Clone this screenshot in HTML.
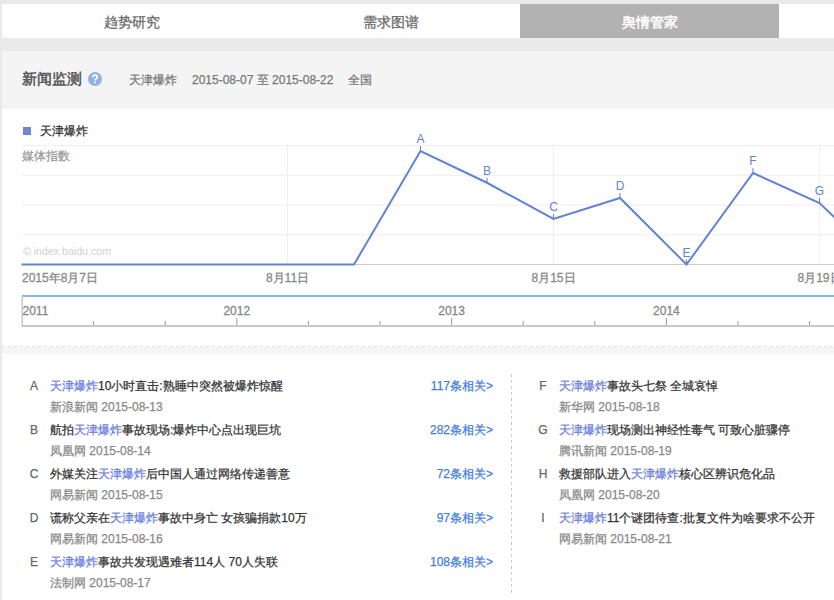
<!DOCTYPE html>
<html><head><meta charset="utf-8">
<style>
html,body{margin:0;padding:0}
body{width:834px;height:600px;overflow:hidden;background:#e9e9e9;position:relative;font-family:"Liberation Sans",sans-serif}
.a{position:absolute;white-space:nowrap;-webkit-text-stroke-width:0.25px}
.tab{top:4px;height:34px;line-height:36px;width:259px;text-align:center;font-size:14px;color:#666}
.t{font-size:12px;color:#333;line-height:16px}
.k{color:#6b7ee0}
.d{font-size:12px;color:#888;line-height:16px}
.l{font-size:12px;color:#666;line-height:16px;width:20px;text-align:center}
.r{font-size:12px;color:#3f7de0;line-height:16px}
</style></head><body>
<!-- nav -->
<div class="a" style="left:2px;top:4px;width:832px;height:34px;background:#fff"></div>
<div class="a tab" style="left:2px">趋势研究</div>
<div class="a tab" style="left:261px">需求图谱</div>
<div class="a tab" style="left:520px;background:#b2b2b2;color:#fff;-webkit-text-stroke-width:0.5px">舆情管家</div>

<!-- header -->
<div class="a" style="left:2px;top:51px;width:832px;height:58px;background:#f4f4f4"></div>
<div class="a" style="left:22px;top:69px;font-size:15px;line-height:20px;color:#555;-webkit-text-stroke:0.5px #555">新闻监测</div>
<svg class="a" style="left:84px;top:68px" width="22" height="22" viewBox="84 68 22 22"><circle cx="95" cy="79" r="7" fill="#8db3e2"/><path d="M92.9,77.3 C92.9,75.9 93.9,75.1 95.1,75.1 C96.4,75.1 97.3,75.9 97.3,77 C97.3,78.1 96.6,78.4 95.9,78.9 C95.3,79.3 95.1,79.7 95.1,80.6" fill="none" stroke="#fff" stroke-width="1.7"/><rect x="94.2" y="81.6" width="1.8" height="1.7" fill="#fff"/></svg>
<div class="a" style="left:129px;top:72px;font-size:12px;line-height:16px;color:#777">天津爆炸</div>
<div class="a" style="left:192px;top:72px;font-size:12px;line-height:16px;color:#777">2015-08-07 至 2015-08-22</div>
<div class="a" style="left:348px;top:72px;font-size:12px;line-height:16px;color:#777">全国</div>

<!-- chart area -->
<div class="a" style="left:2px;top:109px;width:832px;height:238px;background:#fff"></div>
<div class="a" style="left:23px;top:127px;width:8px;height:8px;background:#6e86d6"></div>
<div class="a" style="left:40px;top:123px;font-size:12px;line-height:16px;color:#333">天津爆炸</div>
<div class="a" style="left:22px;top:148px;font-size:12px;line-height:16px;color:#999">媒体指数</div>
<svg class="a" style="left:0;top:0" width="834" height="350" viewBox="0 0 834 350">
<g stroke="#eeeeee" stroke-width="1" fill="none">
<line x1="22" y1="145.5" x2="834" y2="145.5"/>
<line x1="22" y1="175.25" x2="834" y2="175.25"/>
<line x1="22" y1="205" x2="834" y2="205"/>
<line x1="22" y1="234.75" x2="834" y2="234.75"/>
<line x1="287.5" y1="145" x2="287.5" y2="264"/>
<line x1="553.5" y1="145" x2="553.5" y2="264"/>
<line x1="819.5" y1="145" x2="819.5" y2="264"/>
</g>
<line x1="22" y1="264.5" x2="834" y2="264.5" stroke="#cccccc" stroke-width="1"/>
<text x="23" y="255" font-size="11" fill="#cfcfcf" font-family="Liberation Sans" textLength="88" lengthAdjust="spacingAndGlyphs">© index.baidu.com</text>
<polyline fill="none" stroke="#6282d6" stroke-width="2" stroke-linejoin="miter" points="21.5,264.5 354,264.5 420.5,151 487,182.75 553.5,219 620,198 686.5,264.5 753,173 819.5,203 886,267"/>
<g stroke="#6282d6" stroke-width="1">
<line x1="420.5" y1="146" x2="420.5" y2="151"/>
<line x1="487" y1="177.75" x2="487" y2="182.75"/>
<line x1="553.5" y1="214" x2="553.5" y2="219"/>
<line x1="620" y1="193" x2="620" y2="198"/>
<line x1="686.5" y1="259.5" x2="686.5" y2="264.5"/>
<line x1="753" y1="168" x2="753" y2="173"/>
<line x1="819.5" y1="198" x2="819.5" y2="203"/>
</g>
<g font-size="12" fill="#6282d6" font-family="Liberation Sans" text-anchor="middle">
<text x="420.5" y="143">A</text>
<text x="487" y="174.75">B</text>
<text x="553.5" y="211">C</text>
<text x="620" y="190">D</text>
<text x="686.5" y="256.5">E</text>
<text x="753" y="165">F</text>
<text x="819.5" y="195">G</text>
</g>
<g font-size="12" fill="#888" stroke="#888" stroke-width="0.3" font-family="Liberation Sans">
<text x="22" y="282.2">2015年8月7日</text>
<text x="287.5" y="282.2" text-anchor="middle">8月11日</text>
<text x="553.5" y="282.2" text-anchor="middle">8月15日</text>
<text x="819.5" y="282.2" text-anchor="middle">8月19日</text>
</g>
<!-- slider -->
<line x1="22" y1="296" x2="834" y2="296" stroke="#8fb4ec" stroke-width="2"/>
<line x1="22.25" y1="296" x2="22.25" y2="327" stroke="#c8c8c8" stroke-width="1.5"/>
<line x1="22" y1="326" x2="834" y2="326" stroke="#c8c8c8" stroke-width="2"/>
<g stroke="#999" stroke-width="1">
<line x1="93.6" y1="321" x2="93.6" y2="325"/>
<line x1="165.2" y1="321" x2="165.2" y2="325"/>
<line x1="236.8" y1="318" x2="236.8" y2="325"/>
<line x1="308.4" y1="321" x2="308.4" y2="325"/>
<line x1="380" y1="321" x2="380" y2="325"/>
<line x1="451.6" y1="318" x2="451.6" y2="325"/>
<line x1="523.2" y1="321" x2="523.2" y2="325"/>
<line x1="594.8" y1="321" x2="594.8" y2="325"/>
<line x1="666.4" y1="318" x2="666.4" y2="325"/>
<line x1="738" y1="321" x2="738" y2="325"/>
<line x1="809.6" y1="321" x2="809.6" y2="325"/>
</g>
<g font-size="12" fill="#888" stroke="#888" stroke-width="0.3" font-family="Liberation Sans">
<text x="22.5" y="315">2011</text>
<text x="236.8" y="315" text-anchor="middle">2012</text>
<text x="451.6" y="315" text-anchor="middle">2013</text>
<text x="666.4" y="315" text-anchor="middle">2014</text>
</g>
<line x1="2" y1="346.5" x2="834" y2="346.5" stroke="#e0e0e0" stroke-width="1" stroke-dasharray="3 3"/>
</svg>
<div class="a" style="left:2px;top:347px;width:832px;height:7px;background:#f5f5f5"></div>

<!-- news list -->
<div class="a" style="left:2px;top:354px;width:832px;height:246px;background:#fff"></div>
<div class="a" style="left:511px;top:374px;width:1px;height:220px;background-image:linear-gradient(#ccc 50%,transparent 50%);background-size:1px 6px"></div>

<div class="a l" style="left:24px;top:378px">A</div>
<div class="a t" style="left:50px;top:378px"><span class="k">天津爆炸</span>10小时直击:熟睡中突然被爆炸惊醒</div>
<div class="a d" style="left:50px;top:399px">新浪新闻 2015-08-13</div>
<div class="a r" style="right:341px;top:378px">117条相关&gt;</div>

<div class="a l" style="left:24px;top:422px">B</div>
<div class="a t" style="left:50px;top:422px">航拍<span class="k">天津爆炸</span>事故现场:爆炸中心点出现巨坑</div>
<div class="a d" style="left:50px;top:443px">凤凰网 2015-08-14</div>
<div class="a r" style="right:341px;top:422px">282条相关&gt;</div>

<div class="a l" style="left:24px;top:466px">C</div>
<div class="a t" style="left:50px;top:466px">外媒关注<span class="k">天津爆炸</span>后中国人通过网络传递善意</div>
<div class="a d" style="left:50px;top:487px">网易新闻 2015-08-15</div>
<div class="a r" style="right:341px;top:466px">72条相关&gt;</div>

<div class="a l" style="left:24px;top:510px">D</div>
<div class="a t" style="left:50px;top:510px">谎称父亲在<span class="k">天津爆炸</span>事故中身亡 女孩骗捐款10万</div>
<div class="a d" style="left:50px;top:531px">网易新闻 2015-08-16</div>
<div class="a r" style="right:341px;top:510px">97条相关&gt;</div>

<div class="a l" style="left:24px;top:554px">E</div>
<div class="a t" style="left:50px;top:554px"><span class="k">天津爆炸</span>事故共发现遇难者114人 70人失联</div>
<div class="a d" style="left:50px;top:575px">法制网 2015-08-17</div>
<div class="a r" style="right:341px;top:554px">108条相关&gt;</div>

<div class="a l" style="left:533px;top:378px">F</div>
<div class="a t" style="left:559px;top:378px"><span class="k">天津爆炸</span>事故头七祭 全城哀悼</div>
<div class="a d" style="left:559px;top:399px">新华网 2015-08-18</div>

<div class="a l" style="left:533px;top:422px">G</div>
<div class="a t" style="left:559px;top:422px"><span class="k">天津爆炸</span>现场测出神经性毒气 可致心脏骤停</div>
<div class="a d" style="left:559px;top:443px">腾讯新闻 2015-08-19</div>

<div class="a l" style="left:533px;top:466px">H</div>
<div class="a t" style="left:559px;top:466px">救援部队进入<span class="k">天津爆炸</span>核心区辨识危化品</div>
<div class="a d" style="left:559px;top:487px">凤凰网 2015-08-20</div>

<div class="a l" style="left:533px;top:510px">I</div>
<div class="a t" style="left:559px;top:510px"><span class="k">天津爆炸</span>11个谜团待查:批复文件为啥要求不公开</div>
<div class="a d" style="left:559px;top:531px">网易新闻 2015-08-21</div>
</body></html>
